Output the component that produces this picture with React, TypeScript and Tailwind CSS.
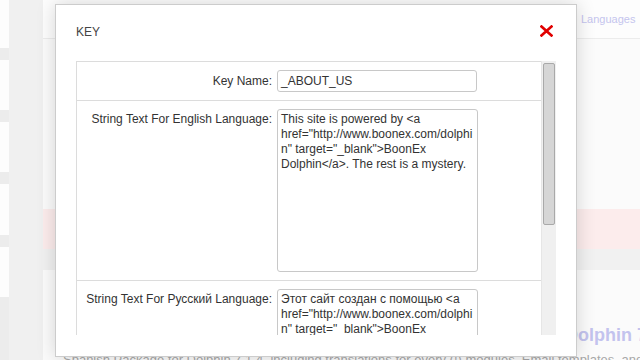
import React from 'react';

const font = "font-['Liberation_Sans',Arial,sans-serif]";

const englishLines = [
  'This site is powered by <a',
  'href="http://www.boonex.com/dolphi',
  'n" target="_blank">BoonEx',
  'Dolphin</a>. The rest is a mystery.',
];

const russianLines = [
  'Этот сайт создан с помощью <a',
  'href="http://www.boonex.com/dolphi',
  'n" target="_blank">BoonEx',
  'Dolphin</a>. Остальное - загадка.',
];

const FakeTextarea = ({ lines }: { lines: string[] }) => (
  <div className="w-[201px] h-[163px] border border-[#c8c8c8] rounded-[3px] px-[3px] pt-[2px] text-[12px] leading-[15px] text-[#333] bg-white overflow-hidden">
    {lines.map((l, i) => (
      <div key={i} className="whitespace-pre">{l}</div>
    ))}
  </div>
);

const Row = ({ label, children }: { label: string; children: React.ReactNode }) => (
  <div className="flex border-b border-[#dcdcdc] py-[8px]">
    <div className="w-[200px] shrink-0 pr-[5px] pt-[3px] text-right text-[12px] leading-[15px] text-[#333]">
      {label}
    </div>
    <div>{children}</div>
  </div>
);

export default function App() {
  return (
    <div className={`relative w-[640px] h-[360px] overflow-hidden bg-[#efefef] ${font}`}>
      {/* faded page behind the dialog */}
      <div className="flex h-full">
        <div className="w-[9px] shrink-0 flex flex-col gap-3 bg-[#ececec]">
          <div className="h-[48px] bg-[#fdfdfd]" />
          <div className="h-[50px] bg-[#fdfdfd]" />
          <div className="h-[50px] bg-[#fdfdfd]" />
          <div className="h-[51px] bg-[#fdfdfd]" />
          <div className="h-[50px] bg-[#fdfdfd]" />
        </div>
        <div className="w-[34px] shrink-0 bg-[#f0f0f0]" />
        <div className="flex-1 min-w-0 flex flex-col bg-[#fbfbfb] overflow-hidden">
          <div className="h-[39px] shrink-0 border-b border-[#ececec] bg-[#fdfdfd] flex items-center pl-[538px] text-[11px] text-[#c5c5ee] whitespace-nowrap">
            Languages <span className="ml-[4px]">·</span>
          </div>
          <div className="h-[170px] shrink-0" />
          <div className="h-[40px] shrink-0 bg-[#fcecec]" />
          <div className="h-[21px] shrink-0 bg-[#f1f1f1]" />
          <div className="h-[54px] shrink-0" />
          <div className="pl-[340px] text-[18px] leading-[22px] font-bold text-[#c3c3ee] whitespace-nowrap">
            Spanish Package for Dolphin 7.1.4
          </div>
          <div className="pl-[20px] mt-[6px] text-[13px] leading-[16px] text-[#a8a8a8] whitespace-nowrap">
            Spanish Package for Dolphin 7.1.4, including translations for every (!) modules, Email templates, and the
          </div>
        </div>
      </div>

      {/* dialog */}
      <div className="absolute left-[55px] top-[4px] w-[522px] h-[353px] bg-white border border-[#cccccc] shadow-[0_0_18px_rgba(0,0,0,0.16)] px-[20px]">
        <div className="h-[56px] pb-[2px] flex items-center justify-between">
          <span className="text-[12px] text-[#444]">KEY</span>
          <svg width="13" height="12" viewBox="0 0 13 12" className="mr-[3px] mb-[2px]">
            <path d="M1.5 1.5 L11.5 10.5 M11.5 1.5 L1.5 10.5" stroke="#e00000" strokeWidth="2.6" strokeLinecap="square" />
          </svg>
        </div>

        <div className="flex h-[274px]">
          <div className="flex-1 border-l border-t border-[#dcdcdc] overflow-hidden">
            <div className="flex items-center border-b border-[#dcdcdc] py-[8px]">
              <div className="w-[200px] shrink-0 pr-[5px] text-right text-[12px] text-[#333]">Key Name:</div>
              <div className="w-[200px] h-[22px] border border-[#c8c8c8] rounded-[3px] px-[3px] flex items-center text-[12px] text-[#333]">
                _ABOUT_US
              </div>
            </div>
            <Row label="String Text For English Language:">
              <FakeTextarea lines={englishLines} />
            </Row>
            <Row label="String Text For Русский Language:">
              <FakeTextarea lines={russianLines} />
            </Row>
          </div>
          <div className="w-[15px] shrink-0 bg-[#f0f0f0] border-l border-[#e6e6e6] pt-[2px] pl-[1px] pr-[1px]">
            <div className="h-[162px] bg-[#d6d6d6] border border-[#a9a9a9] rounded-[2px]" />
          </div>
        </div>
      </div>
    </div>
  );
}
